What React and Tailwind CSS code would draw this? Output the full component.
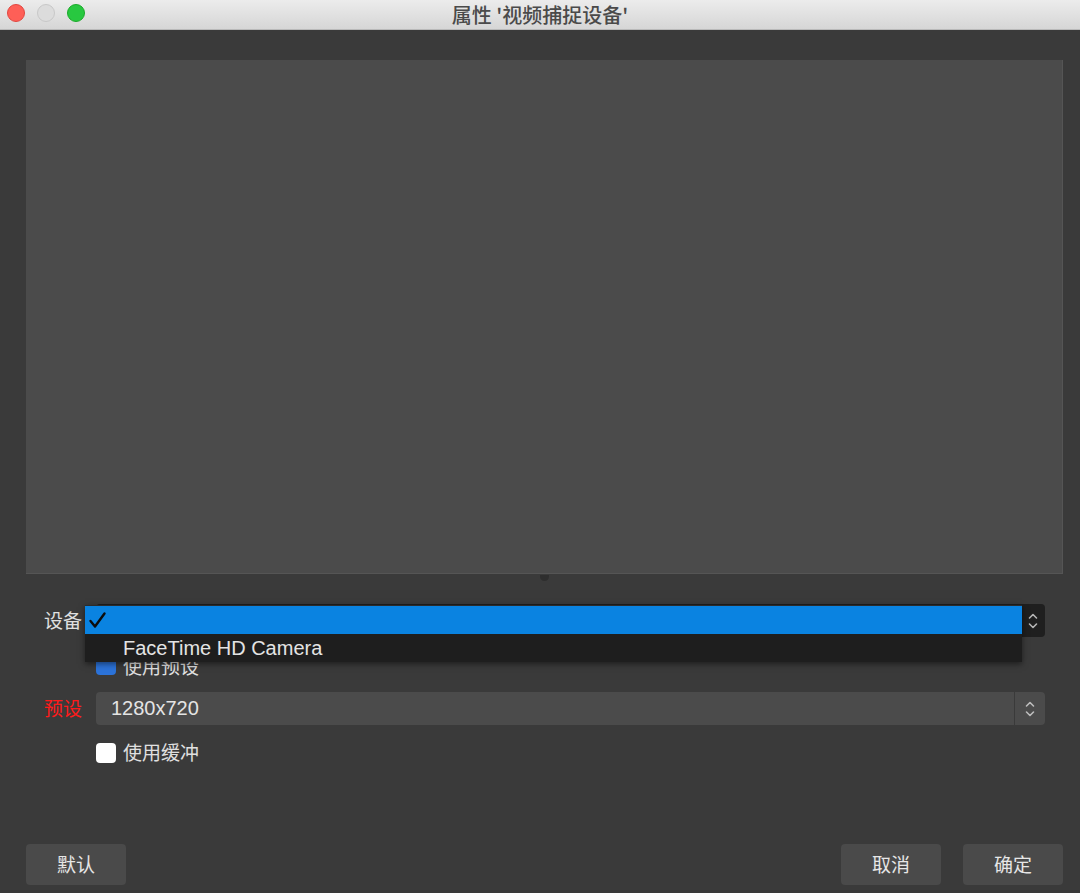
import React from "react";

const cjk = { fontFamily: '"Noto Sans CJK SC", "Noto Sans", sans-serif' };
const latin = { fontFamily: '"Liberation Sans", "Noto Sans CJK SC", sans-serif' };

const UpDown = ({ className = "" }) => (
  <svg width="12" height="20" viewBox="0 0 12 20" className={className} fill="none" stroke="currentColor" strokeWidth="1.6" strokeLinecap="round" strokeLinejoin="round">
    <path d="M2.5 7 L6 3.5 L9.5 7" />
    <path d="M2.5 13 L6 16.5 L9.5 13" />
  </svg>
);

const Button = ({ children }) => (
  <button className="w-[100px] h-[41px] rounded-[4px] bg-[#4a4a4a] text-[19px] text-[#e6e6e6]" style={cjk}>
    {children}
  </button>
);

export default function App() {
  return (
    <div className="w-[1080px] h-[893px] bg-[#3a3a3a] flex flex-col overflow-hidden">
      {/* title bar */}
      <div className="relative h-[30px] shrink-0 bg-gradient-to-b from-[#ececec] to-[#d6d6d6] border-b border-[#b9b9b9] flex items-center justify-center">
        <div className="absolute left-[7px] top-[4px] flex gap-[12px]">
          <span className="w-[18px] h-[18px] rounded-full bg-[#fe5f57] border border-[#e2463f]" />
          <span className="w-[18px] h-[18px] rounded-full bg-[#dcdcdc] border border-[#c8c8c8]" />
          <span className="w-[18px] h-[18px] rounded-full bg-[#28c840] border border-[#1aab29]" />
        </div>
        <span className="text-[20px] text-[#4a4a4a] leading-none font-medium" style={cjk}>
          属性 '视频捕捉设备'
        </span>
      </div>

      <div className="flex-1 flex flex-col pl-[26px] pr-[17px]">
        {/* preview */}
        <div className="mt-[30px] h-[514px] bg-[#4b4b4b] border-r border-b border-[#555555]" />
        <div className="h-[30px] flex justify-center">
          <span className="mt-[1px] w-[9px] h-[6px] rounded-b-full bg-[#2e2e2e]" />
        </div>

        {/* form */}
        <div className="flex flex-col pl-[18px] pr-[18px]">
          <div className="relative flex items-center h-[33px]">
            <span className="w-[40px] text-[19px] text-[#e0e0e0] leading-none -mt-[3px]" style={cjk}>
              设备
            </span>
            <div className="ml-[12px] flex-1 h-[33px] rounded-[4px] bg-[#1f1f1f] flex justify-end items-center pr-[6px] text-[#b5b5b5]">
              <UpDown />
            </div>
            {/* open dropdown */}
            <div className="absolute left-[41px] right-[23px] top-[1px] bg-[#1e1e1e] border-t border-[#2c2c2c] shadow-[0_2px_6px_rgba(0,0,0,0.5)]">
              <div className="h-[28px] bg-[#0a83e1] flex items-center pl-[3px]">
                <svg width="19" height="18" viewBox="0 0 19 18" fill="none" stroke="#0c0c0c" strokeWidth="2.4" strokeLinecap="round" strokeLinejoin="round">
                  <path d="M2.5 10 L7 15.5 L16.5 2.5" />
                </svg>
              </div>
              <div className="h-[28px] flex items-center pl-[38px] text-[20px] text-[#e4e4e4]" style={latin}>
                FaceTime HD Camera
              </div>
            </div>
          </div>

          <div className="flex items-center h-[20px] mt-[18px] pl-[52px] gap-[7px]">
            <span className="w-[20px] h-[20px] rounded-[4px] bg-[#2c73d9]" />
            <span className="text-[19px] text-[#e0e0e0] leading-none" style={cjk}>
              使用预设
            </span>
          </div>

          <div className="flex items-center h-[33px] mt-[17px]">
            <span className="w-[40px] text-[19px] text-[#ff1a1a] leading-none -mt-[3px]" style={cjk}>
              预设
            </span>
            <div className="ml-[12px] flex-1 h-[33px] rounded-[4px] bg-[#4b4b4b] flex items-center">
              <span className="flex-1 pl-[15px] text-[20px] text-[#e4e4e4] -mt-[2px]" style={latin}>
                1280x720
              </span>
              <span className="w-px h-[33px] bg-[#3a3a3a]" />
              <span className="w-[30px] flex justify-center text-[#bcbcbc]">
                <UpDown />
              </span>
            </div>
          </div>

          <label className="flex items-center h-[20px] mt-[18px] pl-[52px] gap-[7px]">
            <span className="w-[20px] h-[20px] rounded-[4px] bg-white" />
            <span className="text-[19px] text-[#e0e0e0] leading-none -mt-[3px]" style={cjk}>
              使用缓冲
            </span>
          </label>
        </div>

        {/* buttons */}
        <div className="mt-auto mb-[8px] flex items-center">
          <Button>默认</Button>
          <div className="flex-1" />
          <div className="flex gap-[22px]">
            <Button>取消</Button>
            <Button>确定</Button>
          </div>
        </div>
      </div>
    </div>
  );
}
